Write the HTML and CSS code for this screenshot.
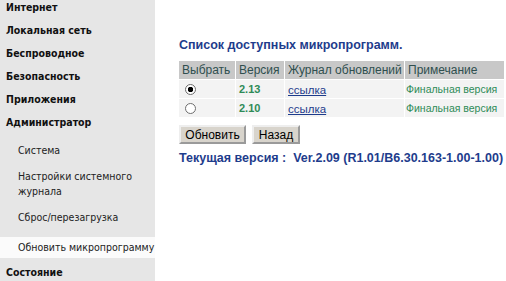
FILE: index.html
```html
<!DOCTYPE html>
<html lang="ru">
<head>
    <meta charset="UTF-8">
    <title>Обновить микропрограмму</title>
    <link rel="stylesheet" href="styles.css">
</head>
<body>
    <div class="page">
        <!-- Left menu -->
        <div class="menu">
            <div class="menu-item">Интернет</div>
            <div class="menu-item">Локальная сеть</div>
            <div class="menu-item">Беспроводное</div>
            <div class="menu-item">Безопасность</div>
            <div class="menu-item">Приложения</div>
            <div class="menu-item">Администратор</div>
            <div class="sub-item">Система</div>
            <div class="sub-item">Настройки системного журнала</div>
            <div class="sub-item">Сброс/перезагрузка</div>
            <div class="sub-item active">Обновить микропрограмму</div>
            <div class="menu-item last">Состояние</div>
        </div>

        <!-- Content -->
        <div class="content">
            <h2 class="title">Список доступных микропрограмм.</h2>
            <table class="fw-table">
                <tr>
                    <th class="col-select">Выбрать</th>
                    <th class="col-ver">Версия</th>
                    <th class="col-log">Журнал обновлений</th>
                    <th class="col-note">Примечание</th>
                </tr>
                <tr>
                    <td><input type="radio" name="fw" checked></td>
                    <td class="ver">2.13</td>
                    <td><a href="#">ссылка</a></td>
                    <td class="note">Финальная версия</td>
                </tr>
                <tr>
                    <td><input type="radio" name="fw"></td>
                    <td class="ver">2.10</td>
                    <td><a href="#">ссылка</a></td>
                    <td class="note">Финальная версия</td>
                </tr>
            </table>
            <div class="buttons">
                <button type="button" class="btn-update">Обновить</button>
                <button type="button" class="btn-back">Назад</button>
            </div>
            <p class="current">Текущая версия :&nbsp; Ver.2.09 (R1.01/B6.30.163-1.00-1.00)</p>
        </div>
    </div>
</body>
</html>
```

FILE: styles.css
```css
* {
    box-sizing: border-box;
}

body {
    margin: 0;
    background-color: #ffffff;
    font-family: "Liberation Sans", Arial, sans-serif;
}

.page {
    display: flex;
    height: 281px;
    overflow: hidden;
}

.menu {
    width: 155px;
    flex-shrink: 0;
    background-color: #e6e6e6;
    font-family: "DejaVu Sans Condensed", "DejaVu Sans", sans-serif;
    color: #111;
}

.menu-item {
    font-size: 10.5px;
    font-weight: bold;
    line-height: 13px;
    padding: 1px 6px 9px 6px;
}

.menu-item.last {
    margin-top: 7px;
}

.sub-item {
    font-size: 10.5px;
    line-height: 15px;
    padding: 5px 8px 6px 18px;
    color: #222;
}

.sub-item.active {
    margin-top: 6px;
    padding: 3px 0 3px 18px;
    background-color: #fbfbfb;
    white-space: nowrap;
    overflow: hidden;
}

.content {
    flex: 1;
    padding: 38px 0 0 24px;
}

.title {
    margin: 0 0 9px 0;
    font-size: 12.5px;
    font-weight: bold;
    color: #1e3c8c;
}

.fw-table {
    border-collapse: separate;
    border-spacing: 1px;
    margin: -1px 0 0 -1px;
    width: 326px;
    table-layout: fixed;
}

.fw-table th {
    background-color: #c8c8c8;
    color: #2f4f4f;
    font-size: 12px;
    font-weight: normal;
    text-align: left;
    white-space: nowrap;
    padding: 0 3px;
    height: 18px;
}

.fw-table td {
    background-color: #f3f3f3;
    white-space: nowrap;
    padding: 0 3px;
    height: 18px;
}

.col-select { width: 56px; }
.col-ver { width: 48px; }
.col-log { width: 119px; }
.col-note { width: 99px; }

.fw-table input[type="radio"] {
    appearance: none;
    margin: 0 0 0 3px;
    width: 11px;
    height: 11px;
    border: 1px solid #6e6e6e;
    border-radius: 50%;
    background-color: #ffffff;
    vertical-align: middle;
}

.fw-table input[type="radio"]:checked {
    background: radial-gradient(circle, #000000 0, #000000 2.5px, #ffffff 3px);
}

.ver {
    color: #2e8b57;
    font-weight: bold;
    font-size: 11px;
}

.note {
    color: #2e8b57;
    font-size: 10.5px;
}

.fw-table td.note {
    padding: 0 1px;
}

.fw-table a {
    color: #1e3c8c;
    font-size: 11.5px;
}

.buttons {
    margin-top: 7px;
    display: flex;
    gap: 6px;
}

button {
    font-family: "Liberation Sans", Arial, sans-serif;
    font-size: 12px;
    background-color: #d8d4cc;
    color: #000;
    border: 2px outset #eeeeee;
    padding: 0;
    height: 19px;
}

.btn-update {
    width: 67px;
}

.btn-back {
    width: 48px;
}

.current {
    margin: 7px 0 0 0;
    font-size: 12.5px;
    font-weight: bold;
    color: #1e3c8c;
}
```
